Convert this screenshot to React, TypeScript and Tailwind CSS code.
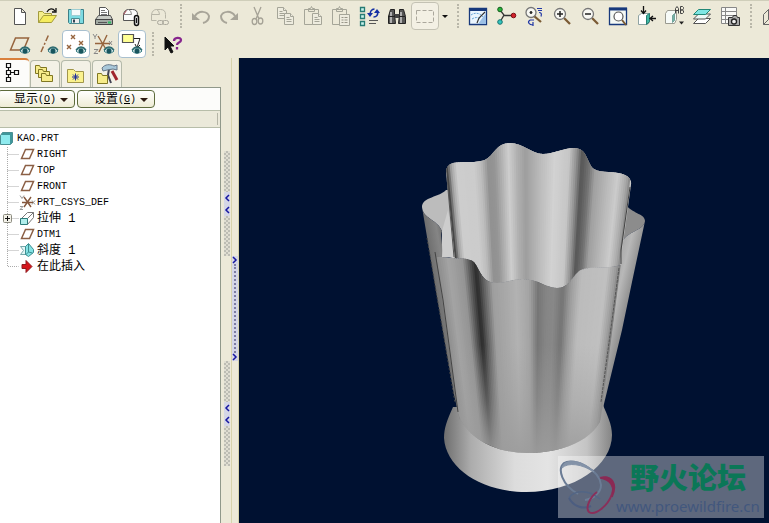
import React from 'react';

type IconProps = { children: React.ReactNode };

function Icon({ children }: IconProps) {
  return (
    <svg viewBox="0 0 28 28" className="h-7 w-7 shrink-0" fill="none" stroke="#222" strokeWidth="1" aria-hidden="true">
      {children}
    </svg>
  );
}

const Eye = () => (
  <g>
    <path d="M14 21c3-4 7-4 10 0c-3 3-7 3-10 0z" fill="#cfe4e4" stroke="#3b7f85" />
    <circle cx="19" cy="21" r="2.5" fill="#17555e" stroke="none" />
    <path d="M14 20c3-4 7-4 10 0" stroke="#2f6c71" strokeWidth="1.3" />
  </g>
);

const Magnifier = ({ sign }: { sign: React.ReactNode }) => (
  <g>
    <path d="M16 16l6 6" stroke="#7a5b34" strokeWidth="2.3" />
    <circle cx="12" cy="12" r="5.5" fill="#f8f8f4" stroke="#777" strokeWidth="1.3" />
    {sign}
  </g>
);

const Page = ({ x, y }: { x: number; y: number }) => (
  <g transform={`translate(${x} ${y})`} stroke="#a5a598" fill="#eeecdf">
    <path d="M.5 .5h6l3 3v8h-9z" />
    <path d="M6.5 .5v3h3M2.5 4.5h3M2.5 6.5h5M2.5 8.5h5" />
  </g>
);

const icons: Record<string, React.ReactNode> = {
  New: <path d="M8.500 6.500h7l4 4v12h-11zM15.500 6.500v4h4" fill="#fff" stroke="#555" />,
  Open: (
    <>
      <path d="M4.500 20.500v-11h4l2 2h7v3" fill="#f4ee8c" stroke="#a39b3c" />
      <path d="M4.500 20.500l5-7h13l-5 7z" fill="#f5ec5e" stroke="#a39b3c" />
      <path d="M13 10c2-4 6-4 8-1M22 6v4h-4" stroke="#111" strokeWidth="1.3" />
    </>
  ),
  Save: (
    <>
      <path d="M6.500 7.500h15v14h-14l-1-1z" fill="#7ddbe2" stroke="#3d8087" />
      <path d="M9.500 7.500h9v6h-9z" fill="#f4fafa" stroke="#9ccdd2" />
      <path d="M9.500 16.500h8v5h-8z" fill="#eee" stroke="#4b8c92" />
      <path d="M12 17.500v3" stroke="#345" strokeWidth="2" />
    </>
  ),
  Print: (
    <>
      <path d="M9.500 14.500v-9h6l3 3v6z" fill="#fff" stroke="#555" />
      <path d="M11 8.500h4M11 10.500h6M11 12.500h6" stroke="#777" />
      <path d="M5.500 17.500l3-4h12l2 4z" fill="#c9ccc6" stroke="#555" />
      <path d="M5.500 17.500h17v5h-17z" fill="#a2aaa3" stroke="#444" />
      <path d="M8 20.500h9" stroke="#555" />
      <path d="M18 20.500h3" stroke="#2fbf62" strokeWidth="2" />
    </>
  ),
  'Send mail': (
    <>
      <path d="M5.500 18.500v-6q1-5 5-5h4q5 0 5 5v6z" fill="#fbfbfb" stroke="#555" />
      <path d="M5.500 12.500h8q0-4-3-5" stroke="#888" />
      <path d="M5.500 12.500l3-4" stroke="#a03c48" />
      <rect x="16.500" y="13.500" width="4" height="10" rx="2" stroke="#111" strokeWidth="1.5" fill="#ddd" />
      <path d="M18.500 16v5" stroke="#111" />
    </>
  ),
  'Send link': (
    <>
      <path d="M5.500 18.500v-6q1-5 5-5h4q5 0 5 5v4M5.500 18.500h5M5.500 12.500h8q0-4-3-5" stroke="#b8b6a8" />
      <rect x="11.500" y="18.500" width="6" height="4" rx="2" stroke="#aaa89c" fill="#e8e5d6" />
      <rect x="16.500" y="18.500" width="6" height="4" rx="2" stroke="#aaa89c" />
    </>
  ),
  Undo: (
    <>
      <path d="M8 14c4-6 12-5 14 0c0 4-2 6-6 7" stroke="#a8a599" strokeWidth="2" />
      <path d="M5 11v7h8z" fill="#a8a599" stroke="none" />
    </>
  ),
  Redo: (
    <>
      <path d="M20 14c-4-6-12-5-14 0c0 4 2 6 6 7" stroke="#a8a599" strokeWidth="2" />
      <path d="M23 11v7h-8z" fill="#a8a599" stroke="none" />
    </>
  ),
  Cut: (
    <g stroke="#a5a296" strokeWidth="1.3">
      <path d="M11 5l5 12M18 5l-5 12" />
      <ellipse cx="11.500" cy="19.500" rx="2.3" ry="3" />
      <ellipse cx="17.500" cy="19" rx="2.3" ry="3" />
    </g>
  ),
  Copy: (
    <>
      <Page x={6} y={5} />
      <Page x={13} y={11} />
    </>
  ),
  Paste: (
    <>
      <path d="M5.500 7.500h14v15h-14zM9.500 9.500v-3h2l1-2 1 2h2v3z" stroke="#a5a598" />
      <Page x={13} y={11} />
    </>
  ),
  'Paste special': (
    <>
      <path d="M5.500 7.500h14v15h-14zM9.500 9.500v-3h2l1-2 1 2h2v3z" stroke="#a5a598" />
      <path d="M12.500 12.500h10v11h-10z" fill="#eeecdf" stroke="#a5a598" />
      <path d="M14.500 15.500h2m1 0h3M14.500 18h2m1 0h3M14.500 20.500h2m1 0h3" stroke="#999689" />
    </>
  ),
  Regenerate: (
    <>
      {[5, 12, 19].map((y) => (
        <path key={y} d={`M5.500 ${y}.5h4v4h-4z`} fill="#c6f1eb" stroke="#267b74" strokeWidth="1.3" />
      ))}
      <path d="M15.500 13c-1-3 1-6 4-6M22.500 9c1 4-1 6-4 6" stroke="#1530a4" strokeWidth="1.5" />
      <path d="M12 11h6l-3 4zM19 11h6l-3-4z" fill="#1530a4" stroke="none" />
      <path d="M14 18.500h9M14 21.500h7" stroke="#555" />
    </>
  ),
  Find: (
    <>
      <path d="M7.500 7.500h4v5l1 9h-7v-7zM16.500 7.500h4l2 7v7h-7l1-9z" fill="#555" stroke="#222" />
      <path d="M12 12h4v4h-4z" fill="#444" stroke="none" />
      <path d="M8 10v11M18 10v11" stroke="#ccc" strokeWidth="1.5" />
      <path d="M5 14.500h7M16 14.500h6" stroke="#222" />
    </>
  ),
  Select: <path d="M5.500 8.500h17v12h-17z" stroke="#aaa79c" strokeDasharray="4 2" />,
  Repaint: (
    <>
      <path d="M5.500 6.500h17v16h-17z" fill="#eaf5fe" stroke="#17397c" strokeWidth="1.3" />
      <path d="M5 7.500h18" stroke="#17397c" strokeWidth="3" />
      <path d="M14 22l8-11v11z" fill="#9cc0e6" stroke="none" />
      <path d="M7 13c4-3 9-2 12 2M8 17c3-2 6-2 8 0" stroke="#68a5d7" strokeDasharray="2 1" />
      <path d="M13 21l2-5 6-6" stroke="#333" strokeWidth="1.2" />
    </>
  ),
  'Spin center': (
    <>
      <path d="M8 8l4 5-4 7M12 13.500h10" stroke="#333" strokeWidth="1.3" />
      <circle cx="8" cy="7.500" r="2.3" fill="#27b33a" stroke="#145a1d" />
      <circle cx="21.500" cy="13.500" r="2.3" fill="#d3222b" stroke="#7c1016" />
      <circle cx="8" cy="20" r="2.3" fill="#35c6c0" stroke="#15736f" />
    </>
  ),
  'Orient mode': (
    <>
      <path d="M14 14l7 6" stroke="#7a5b34" strokeWidth="2.3" />
      <circle cx="11" cy="10.500" r="5" fill="#f8f8f4" stroke="#777" strokeWidth="1.3" />
      <circle cx="11" cy="10.500" r="1" fill="#222" />
      <path d="M17 6.500h5M18 8.500h4M19 10.500c2 0 3 1 2 4M10 18c-3 2-1 5 3 5M10 18h4M13 20v4" stroke="#2137a5" strokeWidth="1.2" />
    </>
  ),
  'Zoom in': <Magnifier sign={<path d="M9 12h6M12 9v6" stroke="#222" strokeWidth="1.5" />} />,
  'Zoom out': <Magnifier sign={<path d="M9 12h6" stroke="#222" strokeWidth="1.5" />} />,
  Refit: (
    <>
      <path d="M5.500 6.500h17v16h-17z" fill="#f5f9f5" stroke="#17397c" strokeWidth="1.3" />
      <path d="M5 7h18" stroke="#17397c" strokeWidth="3" />
      <path d="M18 18l4 5" stroke="#7a5b34" strokeWidth="2" />
      <circle cx="14.500" cy="14.500" r="4.5" fill="#fff" stroke="#555" strokeWidth="1.2" />
    </>
  ),
  Reorient: (
    <>
      <path d="M6.500 13.500l3-2h8v9l-2 2h-9z" fill="#fff" stroke="#8fa3a3" />
      <path d="M14.500 13.500l3-2v8l-3 3z" fill="#3fb7a4" stroke="#277e72" />
      <path d="M11.500 4v7M9 8.500l2.500 3 2.500-3M24 16.500h-6M21 14l-3 2.500 3 2.500" stroke="#111" strokeWidth="1.3" />
    </>
  ),
  'Saved views': (
    <>
      <path d="M5.500 11.500l2-3h9v9l-2 4h-9z" fill="#f7fbf8" stroke="#9a9a90" />
      <path d="M12.500 20.500v-7l2-2v7z" fill="#73b3a7" stroke="#73a39a" />
      <path d="M15.500 11.500v-5l1.500-2 1.500 2v5M15.500 8.500h3M20.500 11.500v-7h2l1 1v1l-1 1.500h-2 2l1 1v1.500l-1 1z" stroke="#444" />
      <path d="M19 19.500h5l-2.500 3z" fill="#222" stroke="none" />
    </>
  ),
  Layers: (
    <g stroke="#555">
      <path d="M5.500 21.500h12l5-5h-12z" fill="#fff" />
      <path d="M5.500 17h12l5-5h-12z" fill="#eef8f6" />
      <path d="M5.500 12.500h12l5-5h-12z" fill="#7fe6e4" stroke="#287" />
    </g>
  ),
  'View manager': (
    <>
      <path d="M5.500 5.500h15v16h-15zM5.500 9.500h15M5.500 13.500h15M5.500 17.500h15M9.500 5.500v16" fill="#fafaf8" stroke="#888" />
      <path d="M12.500 15.500h4l1-2h3l1 2h2v8h-11z" fill="#aaa" stroke="#333" />
      <circle cx="18" cy="19.500" r="2.5" fill="#eee" stroke="#222" strokeWidth="1.3" />
    </>
  ),
  Wireframe: <path d="M6.500 12.500l5-5h10v10l-5 5h-10zM11.500 7.500v10l-5 5M11.500 17.500h10" stroke="#666" />,
  'Datum planes': (
    <>
      <path d="M4.500 20l5-12h13l-5 12z" stroke="#96643d" strokeWidth="1.5" />
      <Eye />
    </>
  ),
  'Datum axes': (
    <>
      <path d="M7 22l8-18" stroke="#96643d" strokeWidth="1.5" strokeDasharray="6 2 2 2" />
      <Eye />
    </>
  ),
  'Datum points': (
    <>
      <path d="M9 5l4 4m0-4l-4 4M17 11l4 4m0-4l-4 4M5 15l4 4m0-4l-4 4" stroke="#96643d" strokeWidth="1.4" />
      <Eye />
    </>
  ),
  'Coordinate systems': (
    <>
      <path d="M5 13.500h15M8 6l9 15M17 5L9 22" stroke="#96643d" strokeWidth="1.4" />
      <path d="M3 4l2 3 2-3M5 7v2M4 19.500h4l-4 4h4M19 11l3 4m0-4l-3 4" stroke="#888" />
      <Eye />
    </>
  ),
  Annotations: (
    <>
      <path d="M4.500 4.500h11v8h-11z" fill="#ffff94" stroke="#555" strokeWidth="1.2" />
      <path d="M16 8.500h6l-3 9M17 14l2 4 3-3" stroke="#222" />
      <Eye />
    </>
  ),
  "What's this?": (
    <>
      <path d="M6 7v13l3-3 3 6 2-1-3-6h4z" fill="#111" stroke="#111" />
      <path d="M15 11c0-4 7-4 7-1s-4 2-4 5M18 17v2.5" stroke="#87258d" strokeWidth="2.3" />
    </>
  ),
};

const fileTools = ['New', 'Open', 'Save', 'Print', 'Send mail', 'Send link'];
const editTools = ['Undo', 'Redo', 'Cut', 'Copy', 'Paste', 'Paste special', 'Regenerate', 'Find'];
const viewTools = ['Repaint', 'Spin center', 'Orient mode', 'Zoom in', 'Zoom out', 'Refit', 'Reorient', 'Saved views', 'Layers', 'View manager'];
const datumTools = ['Datum planes', 'Datum axes', 'Datum points', 'Coordinate systems', 'Annotations'];
const pressed = ['Datum points', 'Annotations'];

function ToolButton({ name }: { name: string }) {
  return (
    <button
      type="button"
      aria-label={name}
      className={
        pressed.includes(name)
          ? 'flex h-7 w-7 shrink-0 items-center justify-center overflow-hidden rounded-sm border border-[#a9c0cf] bg-white'
          : 'h-7 w-7 shrink-0'
      }
    >
      <Icon>{icons[name]}</Icon>
    </button>
  );
}

const Separator = () => (
  <div className="flex h-7 w-[13px] shrink-0 justify-center py-0.5">
    <div className="w-0 border-l-2 border-dotted border-[#b9b7a9]" />
  </div>
);

function Toolbar() {
  return (
    <header className="shrink-0 overflow-hidden border-t border-[#cfceba] bg-[#ece9d8] pt-px">
      <div className="flex pl-1.5">
        {fileTools.map((n) => <ToolButton key={n} name={n} />)}
        <Separator />
        {editTools.map((n) => <ToolButton key={n} name={n} />)}
        <button type="button" aria-label="Select" className="h-7 w-7 shrink-0 rounded-sm border border-[#c4c2b4] bg-[#f3f0e4]">
          <svg viewBox="1 1 26 26" fill="none" className="h-full w-full" aria-hidden="true">{icons.Select}</svg>
        </button>
        <button type="button" aria-label="Select options" className="flex h-7 w-3 shrink-0 items-center justify-center">
          <svg viewBox="0 0 6 3" className="h-[3px] w-1.5" aria-hidden="true">
            <path d="M0 0h6L3 3z" fill="#111" />
          </svg>
        </button>
        <Separator />
        {viewTools.map((n) => <ToolButton key={n} name={n} />)}
        <Separator />
        <ToolButton name="Wireframe" />
      </div>
      <div className="flex pl-1.5">
        {datumTools.map((n) => <ToolButton key={n} name={n} />)}
        <Separator />
        <ToolButton name="What's this?" />
      </div>
    </header>
  );
}

const Caret = () => (
  <svg viewBox="0 0 8 4" className="h-1 w-2 shrink-0" aria-hidden="true">
    <path d="M0 0h8L4 4z" fill="#2c1a10" />
  </svg>
);

const Folder = ({ x, y }: { x: number; y: number }) => (
  <path d={`M${x}.5 ${y + 8}.5v-8h4l1 2h6v6z`} fill="#f7ec8a" stroke="#807722" />
);

const tabs = [
  {
    name: 'Folder browser',
    icon: <><Folder x={4} y={4} /><Folder x={7} y={8} /><Folder x={10} y={12} /></>,
  },
  {
    name: 'Favorites',
    icon: (
      <>
        <path d="M5.500 21.500v-13h6l2 2h8v11z" fill="#fbf28d" stroke="#a1964a" />
        <path d="M13.500 12.500v7M10 16h7M11 13.500l5 5M16 13.500l-5 5" stroke="#1f2f9c" />
      </>
    ),
  },
  {
    name: 'Connections',
    icon: (
      <>
        <path d="M19 10l5 9" stroke="#a0262c" strokeWidth="3" />
        <path d="M16 8l-1 6 3 8" stroke="#445" strokeWidth="2" />
        <path d="M4.500 22.500v-10h4l1 2h5v8z" fill="#f7ec8a" stroke="#807722" />
        <path d="M9 7c3-4 8-4 12-2l3-1v5l-4-1-6 1-4 1z" fill="#a9c8da" stroke="#678" />
      </>
    ),
  },
];

const planeIcon = <path d="M2.500 12.500l4-9h8l-4 9z" stroke="#8b5f45" strokeWidth="1.5" />;

const treeItems = [
  { label: 'RIGHT', icon: planeIcon },
  { label: 'TOP', icon: planeIcon },
  { label: 'FRONT', icon: planeIcon },
  {
    label: 'PRT_CSYS_DEF',
    icon: (
      <>
        <path d="M3 8.500h11M5 3l7 10M12 3L5 13" stroke="#84573d" strokeWidth="1.4" />
        <path d="M1 1.500l2 3 2-3M1 12.500h3l-3 3h3M13 6.500l3 4m0-4l-3 4" stroke="#999" />
      </>
    ),
  },
  {
    label: '拉伸 1',
    expandable: true,
    icon: (
      <>
        <path d="M2.500 8.500l6-6M8.500 8.500l6-6M8.500 14.500l6-7" stroke="#777" />
        <path d="M8.500 2.500h6v5" stroke="#777" />
        <path d="M1.500 8.500h7v6h-7z" fill="#b0eeec" stroke="#2d7b7a" />
      </>
    ),
  },
  { label: 'DTM1', icon: planeIcon },
  {
    label: '斜度 1',
    icon: (
      <>
        <path d="M1.500 4.500h6v8h-6l3-4z" fill="#e3f6f6" stroke="#77a9ac" />
        <path d="M6.500 12.500v-8l3-3 5 6v3l-5 4z" fill="#84e2e4" stroke="#3c8e91" />
        <path d="M9.500 2v8l4 1M6.500 13l3-3" stroke="#3c8e91" />
      </>
    ),
  },
  { label: '在此插入', icon: <path d="M3 6.500h4v-4l6 6-6 6v-4H3z" fill="#d5151b" stroke="#8e1b1f" /> },
];

function ModelTree() {
  return (
    <nav aria-label="Model tree" className="flex-1 bg-white pt-[3px] font-['Liberation_Mono','Noto_Sans_CJK_SC',monospace] text-[10px] leading-4 text-black">
      <div className="flex h-4 items-center">
        <svg viewBox="0 0 17 16" fill="none" className="h-4 w-[17px]" aria-hidden="true">
          <path d="M.5 4.500l2-3h10v10l-2 2h-10z" fill="#3f979b" stroke="#4b8f93" />
          <path d="M1 4h9v9H1z" fill="#8eeaee" />
        </svg>
        <span>KAO.PRT</span>
      </div>
      <ul>
        {treeItems.map((item, i) => (
          <li key={item.label} className="flex h-4 items-center">
            <svg viewBox="0 0 19 16" fill="none" className="h-4 w-[19px] shrink-0" aria-hidden="true">
              <path
                d={i === treeItems.length - 1 ? 'M7.500 0v7.500h11' : 'M7.500 0v16M7.500 7.500h11'}
                stroke="#aaa"
                strokeDasharray="1 1"
              />
              {item.expandable && (
                <>
                  <rect x="3.500" y="3.500" width="8" height="8" rx="1" fill="#f3f1e8" stroke="#8b8b80" />
                  <path d="M5 7.500h5M7.500 5v5" stroke="#111" />
                </>
              )}
            </svg>
            <svg viewBox="0 1 18 16" fill="none" className="h-4 w-[18px] shrink-0" aria-hidden="true">{item.icon}</svg>
            <span className={/[^\x00-\x7f]/.test(item.label) ? 'text-xs leading-4' : ''}>{item.label}</span>
          </li>
        ))}
      </ul>
    </nav>
  );
}

function MenuButton({ label, accessKey }: { label: string; accessKey: string }) {
  return (
    <button
      type="button"
      className="flex h-[18px] w-[78px] items-center justify-end gap-1 rounded-sm border border-[#5d6b3c] bg-gradient-to-b from-white to-[#eeecd5] pt-px pr-1.5 font-['Liberation_Mono','Noto_Sans_CJK_SC',monospace] text-black"
    >
      <span className="flex items-center text-xs leading-4">
        {label}
        <span className="text-[10px]">(<u>{accessKey}</u>)</span>
      </span>
      <Caret />
    </button>
  );
}

function Sidebar() {
  return (
    <aside className="flex w-[222px] shrink-0 flex-col overflow-hidden bg-[#ece9d8]">
      <div role="tablist" className="flex h-[29px] items-end gap-px">
        <button type="button" role="tab" aria-selected="true" aria-label="Model tree" className="h-[29px] w-[29px] rounded-tr-sm border-t-2 border-[#d9803c] bg-[#fcfcfa]">
          <svg viewBox="0 0 28 28" fill="none" className="h-7 w-7" aria-hidden="true">
            <path d="M6.500 3.500h4v4h-4zM6.500 10.500h4v4h-4zM6.500 17.500h4v4h-4zM14.500 10.500h4v4h-4zM8.500 7.500v3M8.500 14.500v3M10.500 12.500h4" stroke="#111" strokeWidth="1.2" />
          </svg>
        </button>
        {tabs.map((tab) => (
          <button key={tab.name} type="button" role="tab" aria-selected="false" aria-label={tab.name} className="h-[27px] w-[30px] overflow-hidden rounded-t-sm border border-b-0 border-[#b4b9aa] bg-[#f3f1e6]">
            <Icon>{tab.icon}</Icon>
          </button>
        ))}
      </div>
      <div className="mr-px flex flex-1 flex-col border-t border-r border-[#90988a] bg-[#fcfcfa]">
        <div className="-ml-[3px] flex gap-0.5 py-0.5">
          <MenuButton label="显示" accessKey="O" />
          <MenuButton label="设置" accessKey="G" />
        </div>
        <div className="flex h-[18px] justify-end border-y border-[#b7bda9] bg-[#ebe9da] py-0.5 pr-0.5">
          <div className="w-px bg-[#b5b5a6]" />
        </div>
        <ModelTree />
      </div>
    </aside>
  );
}

function Chevron({ right = false }: { right?: boolean }) {
  return (
    <svg viewBox="0 0 6 8" className="h-2 w-1.5" fill="none" aria-hidden="true">
      <path d={right ? 'M1 1l3 3-3 3' : 'M5 1L2 4l3 3'} stroke="#1616a0" strokeWidth="1.5" />
    </svg>
  );
}

const GripDots = () => (
  <div className="w-1.5 flex-1 bg-[repeating-conic-gradient(#bdbdb4_0_25%,#e0ded2_0_50%)] bg-[size:4px_4px]" />
);

function Grip() {
  return (
    <button type="button" aria-label="Collapse panel" className="flex h-[105px] w-1.5 flex-col items-center">
      <GripDots />
      <span className="flex flex-col gap-1 bg-[#d4d6e6] py-0.5">
        <Chevron />
        <Chevron />
      </span>
      <GripDots />
    </button>
  );
}

function Splitter() {
  return (
    <div className="flex w-[17px] shrink-0 bg-[#ece9d8]">
      <div className="flex w-2.5 flex-col items-center pt-[93px]">
        <Grip />
        <div className="h-[105px]" />
        <Grip />
      </div>
      <div className="flex flex-1 flex-col items-center border-x border-[#d6d3ad] pt-[198px]">
        <button type="button" aria-label="Expand panel" className="flex h-[105px] w-1.5 flex-col items-center bg-[#d4d6e6]">
          <Chevron right />
          <span className="w-0 flex-1 border-l-2 border-dotted border-[#7c7ca3]" />
          <Chevron right />
        </button>
      </div>
    </div>
  );
}

// [position across the surface, grey level]
type Stop = [number, number];

const insideStops: Stop[] = [
  [0, 50], [0.03, 165], [0.06, 205], [0.15, 204], [0.19, 188], [0.23, 144], [0.265, 150], [0.34, 206], [0.385, 176],
  [0.43, 158], [0.51, 188], [0.585, 210], [0.66, 198], [0.7, 144], [0.73, 86], [0.77, 114], [0.805, 160], [0.93, 204], [0.98, 165], [1, 130],
];

const frontStops: Stop[] = [
  [0, 140], [0.065, 164], [0.14, 148], [0.18, 85], [0.21, 42], [0.24, 88], [0.295, 158], [0.43, 178], [0.5, 164],
  [0.55, 118], [0.6, 134], [0.64, 136], [0.69, 116], [0.735, 156], [0.79, 188], [0.927, 192], [0.975, 155], [1, 120],
];

function greyAt(stops: Stop[], t: number) {
  const i = Math.max(1, stops.findIndex(([p]) => p >= t));
  const [p0, g0] = stops[i - 1];
  const [p1, g1] = stops[i];
  return Math.round(g0 + ((g1 - g0) * (t - p0)) / (p1 - p0));
}

interface FlutesProps {
  stops: Stop[];
  top: [number, number, number];
  bottom: [number, number, number];
}

// top and bottom are [y, left, right]; the flutes narrow between them
function Flutes({ stops, top, bottom }: FlutesProps) {
  const count = 90;
  return (
    <>
      {Array.from({ length: count }, (_, i) => {
        const a = i / count;
        const b = Math.min(1, (i + 1.6) / count);
        const g = greyAt(stops, (i + 0.5) / count);
        const x = ([, l, r]: number[], t: number) => l + (r - l) * t;
        return (
          <polygon
            key={i}
            points={`${x(top, a)},${top[0]} ${x(top, b)},${top[0]} ${x(bottom, b)},${bottom[0]} ${x(bottom, a)},${bottom[0]}`}
            fill={`rgb(${g},${g},${g})`}
          />
        );
      })}
    </>
  );
}

const backRim = 'M446 172Q446 165 453 163C462 161 472 163 481 161C494 159 494 143 510 143C523 143 532 154 543 154C554 154 563 148 574 148C588 148 587 164 594 169C602 174 614 170 625 175Q632 178 631 185';
const frontRim = 'L620 265C607 269 590 266 581 270C573 274 570 288 557 288C546 288 538 279 523 279C512 279 506 283 497 283C478 283 480 262 470 260C462 257 451 259 442 257';
const frontEdge = 'M436 254L442 257C451 259 462 257 470 260C480 262 478 283 497 283C506 283 512 279 523 279C538 279 546 288 557 288C570 288 573 274 581 270C590 266 607 269 621 265';

function Cup() {
  return (
    <svg viewBox="239 58 530 465" preserveAspectRatio="xMidYMid meet" className="h-full w-full" role="img" aria-label="Fluted cup model">
      <defs>
        <clipPath id="inside"><path d={`${backRim}${frontRim}L454 257Z`} /></clipPath>
        <clipPath id="front"><path d={`${frontEdge}L603 408C603 436 567 453 527 453C493 453 461 435 457 408Z`} /></clipPath>
        <linearGradient id="base" x1="444" x2="612" y1="0" y2="0" gradientUnits="userSpaceOnUse">
          <stop offset="0" stopColor="#6e6e6e" />
          <stop offset=".16" stopColor="#acacac" />
          <stop offset=".42" stopColor="#dcdcdc" />
          <stop offset=".62" stopColor="#e4e4e4" />
          <stop offset=".85" stopColor="#c4c4c4" />
          <stop offset="1" stopColor="#858585" />
        </linearGradient>
        <linearGradient id="leftLobe" x1="422" x2="446" y1="215" y2="211" gradientUnits="userSpaceOnUse">
          <stop offset="0" stopColor="#6c6c6c" />
          <stop offset=".5" stopColor="#858585" />
          <stop offset="1" stopColor="#5a5a5a" />
        </linearGradient>
        <linearGradient id="rightLobe" x1="620" x2="645" y1="230" y2="236" gradientUnits="userSpaceOnUse">
          <stop offset="0" stopColor="#a0a0a0" />
          <stop offset=".5" stopColor="#b8b8b8" />
          <stop offset="1" stopColor="#8c8c8c" />
        </linearGradient>
        <linearGradient id="settle" x1="0" x2="0" y1="345" y2="455" gradientUnits="userSpaceOnUse">
          <stop offset="0" stopColor="#a0a0a0" stopOpacity="0" />
          <stop offset=".5" stopColor="#9e9e9e" stopOpacity=".4" />
          <stop offset="1" stopColor="#9c9c9c" stopOpacity=".92" />
        </linearGradient>
      </defs>

      {/* foot */}
      <path d="M453 407C447 420 444 428 444 438C446 468 481 492 526 492C575 492 612 465 612 435C612 424 607 415 603 405Z" fill="url(#base)" />

      {/* outer lobes */}
      <path d="M446 190C440 197 422 197 422 207C423 219 437 219 442 231V257H456V190Z" fill="#bcbcbc" />
      <path d="M442 231V257H456L448 210Z" fill="#cdcdcd" />
      <path d="M422 207C423 219 437 219 442 231C440 236 443 240 442 257L460 420L454 395L437 297Z" fill="url(#leftLobe)" />
      <path d="M627 206C634 214 645 214 645 221C644 232 622 231 621 247L618 265Z" fill="#8c8c8c" />
      <path d="M645 221C644 232 622 231 621 247L620 265L598 418L603 408L622 330L632 282Z" fill="url(#rightLobe)" />

      <g clipPath="url(#inside)">
        <rect x="440" y="140" width="195" height="150" fill="#c8c8c8" />
        <Flutes stops={insideStops} top={[140, 443, 635]} bottom={[290, 458, 617]} />
      </g>
      <path d="M447 178L454 257" stroke="#555" strokeWidth="1" fill="none" />
      <path d="M630 187L621 250V264" stroke="#444" strokeWidth="1" fill="none" />

      <g clipPath="url(#front)">
        <Flutes stops={frontStops} top={[257, 436, 622]} bottom={[455, 464, 596]} />
        <rect x="430" y="345" width="190" height="110" fill="url(#settle)" />
      </g>
      <path d="M435 252L443 300L458 412" stroke="#444" strokeWidth="1" fill="none" />
      <path d="M619 268L601 402" stroke="#555" strokeWidth="1" strokeDasharray="3 1" fill="none" />
      <path d="M427 238L437 297L455 403" stroke="#444" strokeDasharray="2 2" fill="none" />
    </svg>
  );
}

function Watermark() {
  return (
    <div className="absolute right-[5px] bottom-[5px] flex h-[62px] w-[206px] bg-white/37">
      <svg viewBox="0 0 58 62" fill="none" className="h-[62px] w-[58px] shrink-0" aria-hidden="true">
        <path d="M20 38C4 29-1 13 6 7C16 1 42 14 43 29C43 37 35 43 27 44" stroke="#6b7c95" strokeWidth="2" />
        <path d="M4 12C6 2 24 3 36 16C24 8 10 6 4 12Z" fill="#8493a8" stroke="#8493a8" />
        <path d="M11 42C16 34 30 33 42 43" stroke="#526585" strokeWidth="1.5" />
        <path d="M11 42C15 50 25 54 33 50" stroke="#4c5d80" strokeWidth="2" />
        <path d="M42 22C52 19 58 26 54 38C50 50 37 60 31 56C27 52 32 41 39 36" stroke="#8a2f5a" strokeWidth="2" />
        <path d="M43 22C54 19 60 28 54 41C57 30 52 24 43 22Z" fill="#8a2a54" stroke="#8a2a54" strokeWidth="1.5" />
      </svg>
      <div className="flex flex-col items-center whitespace-nowrap">
        <span className="font-['Noto_Sans_CJK_SC',sans-serif] text-[29px] leading-10 font-black text-[#0b7757]">野火论坛</span>
        <a href="#" className="font-['Noto_Sans',sans-serif] text-[15px] leading-5 text-[#42577d]">www.proewildfire.cn</a>
      </div>
    </div>
  );
}

export default function App() {
  return (
    <div className="flex h-screen flex-col overflow-hidden bg-[#ece9d8]">
      <Toolbar />
      <div className="flex min-h-0 flex-1">
        <Sidebar />
        <Splitter />
        <main className="relative min-w-0 flex-1 overflow-hidden bg-[#001131]">
          <Cup />
          <Watermark />
        </main>
      </div>
    </div>
  );
}
